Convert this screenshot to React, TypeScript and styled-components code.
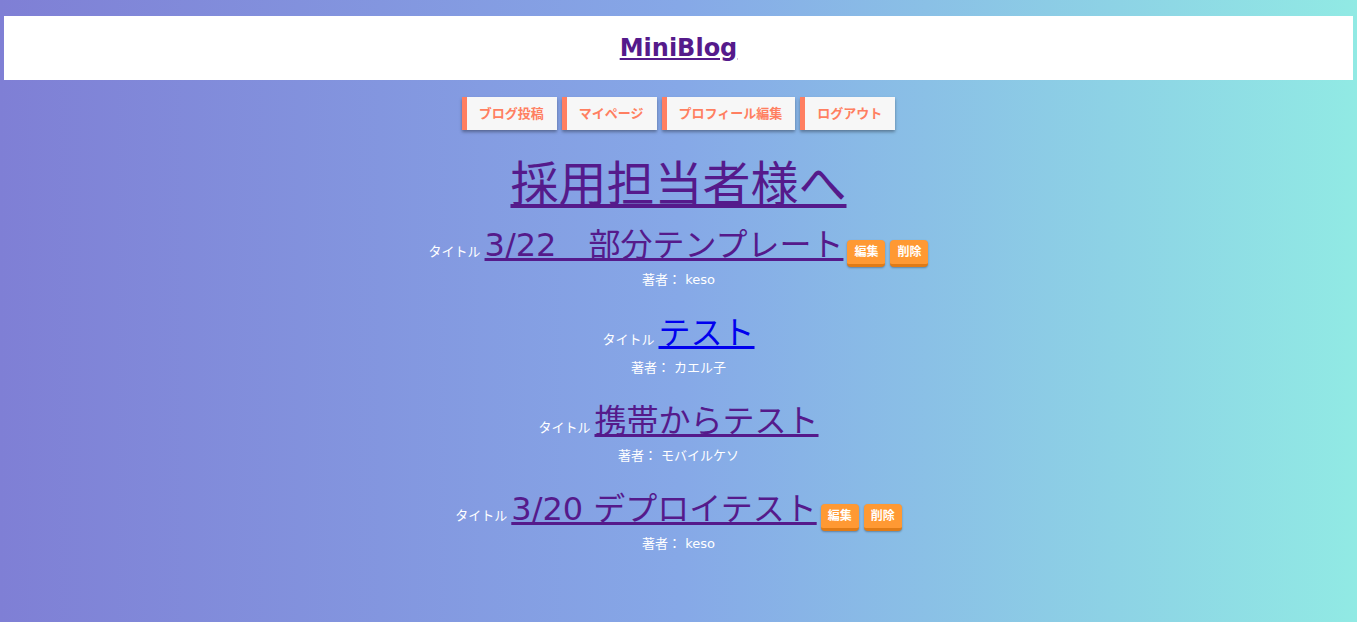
import styled, { createGlobalStyle } from 'styled-components';

const GlobalStyle = createGlobalStyle`
  html, body {
    margin: 0;
    padding: 0;
  }
  body {
    font-family: "DejaVu Sans", "Noto Sans CJK JP", sans-serif;
  }
`;

const Page = styled.div`
  min-height: 100vh;
  box-sizing: border-box;
  padding: 16px 4px 0;
  background: linear-gradient(to right, #7f7fd5, #86a8e7, #91eae4);
`;

const Header = styled.header`
  height: 64px;
  box-sizing: border-box;
  padding-top: 17px;
  background: #fff;
  text-align: center;
`;

const Logo = styled.a`
  font-size: 24px;
  font-weight: bold;
  line-height: 30px;
  color: #551a8b;
  text-decoration: underline;
  cursor: pointer;
`;

const Nav = styled.nav`
  display: flex;
  justify-content: center;
  gap: 5px;
  margin-top: 17px;
`;

const NavButton = styled.a`
  display: block;
  padding: 8px 13px 8px 12px;
  border-left: 5px solid #ff7f61;
  background: #f7f7f7;
  color: #ff7f61;
  font-size: 13px;
  font-weight: bold;
  line-height: 17px;
  box-shadow: 0 2px 3px rgba(0, 0, 0, 0.35);
  cursor: pointer;
`;

const Main = styled.main`
  text-align: center;
`;

const Heading = styled.h2`
  margin: 30px 0 0;
  font-size: 48px;
  font-weight: normal;
  line-height: 48px;

  a {
    color: #551a8b;
    text-decoration: underline;
  }
`;

const PostList = styled.div`
  margin-top: 15px;
`;

const Post = styled.article`
  margin-bottom: 21px;
`;

const TitleRow = styled.div`
  display: flex;
  justify-content: center;
  align-items: baseline;
  gap: 4px;
  height: 44px;
`;

const Label = styled.span`
  color: #fff;
  font-size: 13px;
  line-height: 20px;
`;

const TitleLink = styled.a<{ $visited: boolean }>`
  color: ${({ $visited }) => ($visited ? '#551a8b' : '#0000ee')};
  font-size: 32px;
  line-height: 44px;
  text-decoration: underline;
  cursor: pointer;
`;

const Actions = styled.div`
  display: flex;
  align-items: baseline;
  gap: 5px;
`;

const ActionButton = styled.button`
  padding: 4px 7px;
  border: none;
  border-bottom: 3px solid #e07b16;
  border-radius: 4px;
  background: #ff9933;
  color: #fff;
  font-family: inherit;
  font-size: 12px;
  font-weight: bold;
  line-height: 16px;
  box-shadow: 0 1px 2px rgba(0, 0, 0, 0.3);
  cursor: pointer;
`;

const Author = styled.p`
  margin: 3px 0 0;
  color: #fff;
  font-size: 13px;
  line-height: 20px;
`;

type PostItem = {
  title: string;
  author: string;
  visited: boolean;
  mine: boolean;
};

const posts: PostItem[] = [
  { title: '3/22　部分テンプレート', author: 'keso', visited: true, mine: true },
  { title: 'テスト', author: 'カエル子', visited: false, mine: false },
  { title: '携帯からテスト', author: 'モバイルケソ', visited: true, mine: false },
  { title: '3/20 デプロイテスト', author: 'keso', visited: true, mine: true },
];

const navItems = ['ブログ投稿', 'マイページ', 'プロフィール編集', 'ログアウト'];

export default function App() {
  return (
    <Page>
      <GlobalStyle />
      <Header>
        <Logo>MiniBlog</Logo>
      </Header>
      <Nav>
        {navItems.map((item) => (
          <NavButton key={item}>{item}</NavButton>
        ))}
      </Nav>
      <Main>
        <Heading>
          <a>採用担当者様へ</a>
        </Heading>
        <PostList>
          {posts.map((post) => (
            <Post key={post.title}>
              <TitleRow>
                <Label>タイトル</Label>
                <TitleLink $visited={post.visited}>{post.title}</TitleLink>
                {post.mine && (
                  <Actions>
                    <ActionButton>編集</ActionButton>
                    <ActionButton>削除</ActionButton>
                  </Actions>
                )}
              </TitleRow>
              <Author>著者： {post.author}</Author>
            </Post>
          ))}
        </PostList>
      </Main>
    </Page>
  );
}
